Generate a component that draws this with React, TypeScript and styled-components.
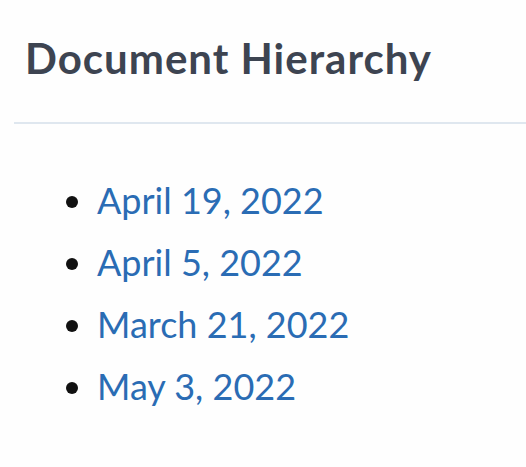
import React from "react";
import styled, { createGlobalStyle } from "styled-components";

const GlobalStyle = createGlobalStyle`
  html, body {
    margin: 0;
    padding: 0;
    background: #ffffff;
  }
  body {
    font-family: Lato, "Open Sans", sans-serif;
  }
`;

const Panel = styled.section`
  width: 526px;
  height: 467px;
  overflow: hidden;
  background: #fefefe;
`;

const Header = styled.header`
  margin-left: 14px;
  padding: 34px 0 0 11px;
  height: 124px;
  box-sizing: border-box;
  border-bottom: 2px solid #dfe7ef;
`;

const Title = styled.h2`
  margin: 0;
  font-family: Lato, sans-serif;
  font-weight: 700;
  font-size: 42px;
  line-height: 48px;
  letter-spacing: 1px;
  color: #3d4451;
`;

const DateList = styled.ul`
  margin: 0;
  padding: 45px 0 0 97px;
  list-style: disc;
`;

const DateItem = styled.li`
  font-family: Lato, sans-serif;
  font-size: 36px;
  line-height: 62px;
  color: #111;
`;

const DateLink = styled.a`
  color: #2a6cb4;
  text-decoration: none;
`;

const dates = ["April 19, 2022", "April 5, 2022", "March 21, 2022", "May 3, 2022"];

export default function App() {
  return (
    <>
      <GlobalStyle />
      <Panel>
        <Header>
          <Title>Document Hierarchy</Title>
        </Header>
        <DateList>
          {dates.map((d) => (
            <DateItem key={d}>
              <DateLink href="#">{d}</DateLink>
            </DateItem>
          ))}
        </DateList>
      </Panel>
    </>
  );
}
